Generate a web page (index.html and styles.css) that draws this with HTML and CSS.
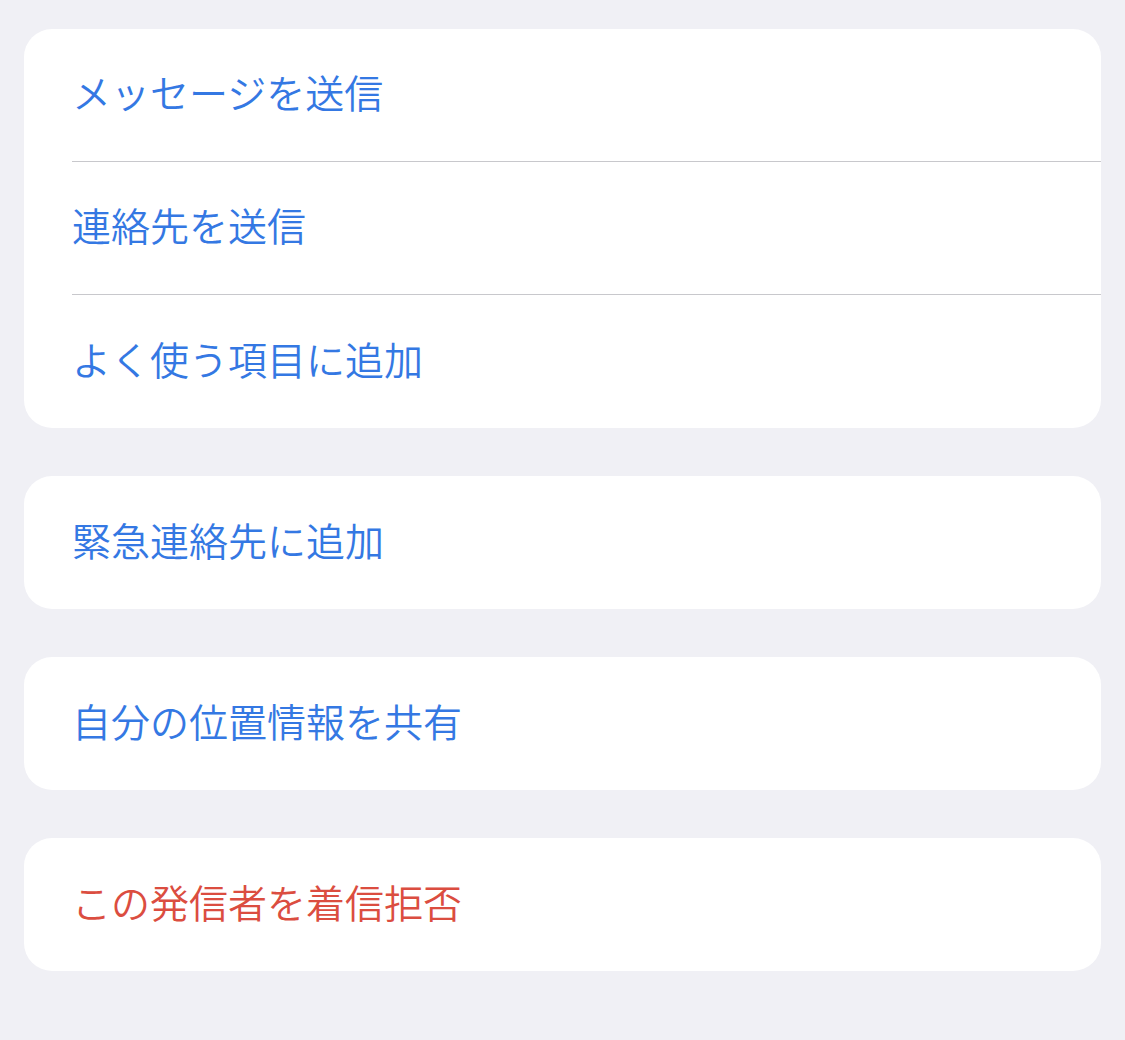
FILE: index.html
```html
<!DOCTYPE html>
<html lang="ja">
<head>
    <meta charset="UTF-8">
    <meta name="viewport" content="width=device-width, initial-scale=1.0">
    <title>連絡先</title>
    <link rel="stylesheet" href="styles.css">
</head>
<body>
    <div class="list">
        <div class="group">
            <div class="row">メッセージを送信</div>
            <div class="row">連絡先を送信</div>
            <div class="row">よく使う項目に追加</div>
        </div>
        <div class="group">
            <div class="row">緊急連絡先に追加</div>
        </div>
        <div class="group">
            <div class="row">自分の位置情報を共有</div>
        </div>
        <div class="group">
            <div class="row danger">この発信者を着信拒否</div>
        </div>
    </div>
</body>
</html>
```

FILE: styles.css
```css
body {
    font-family: "Noto Sans CJK JP", "Noto Sans", sans-serif;
    margin: 0;
    padding: 0;
    background-color: #f0f0f5;
    height: 1040px;
}
.list {
    display: flex;
    flex-direction: column;
    gap: 48px;
    padding: 29px 24px 0 24px;
}
.group {
    background: #fff;
    border-radius: 28px;
    overflow: hidden;
}
.row {
    display: flex;
    align-items: center;
    height: 133px;
    box-sizing: border-box;
    margin-left: 48px;
    padding-bottom: 8px;
    font-size: 39px;
    font-weight: 350;
    color: #3478e3;
}
.row:not(:last-child) {
    border-bottom: 1px solid #c8c8cc;
}
.danger {
    color: #db4d40;
}
```
